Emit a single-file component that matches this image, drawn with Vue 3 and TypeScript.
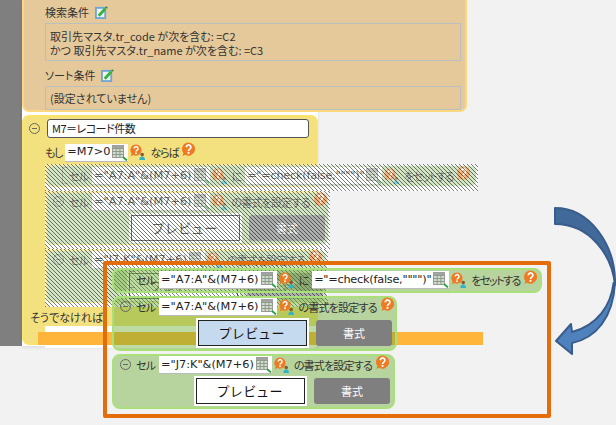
<script setup lang="ts">
interface FormatRow {
  id: string
  range: string
  wide: string
}

const formatRows: FormatRow[] = [
  { id: 'a', range: '="A7:A"&(M7+6)', wide: 'row-a' },
  { id: 'j', range: '="J7:K"&(M7+6)', wide: 'row-j' },
]
const setRange = '="A7:A"&(M7+6)'
const setValue = '="=check(false,"""")"'
</script>

<template>
  <div class="stage">
    <svg class="sprite" aria-hidden="true">
      <symbol id="i-grid" viewBox="0 0 17 17">
        <rect x="1.5" y="1.5" width="11" height="12" fill="#cfdccb" stroke="#9a9a9a" />
        <path d="M1.5 4.5h11M1.5 7.5h11M1.5 10.5h11M5.2 1.5v12M8.9 1.5v12" stroke="#8f9a8a" fill="none" />
        <rect x="1.5" y="1.5" width="11" height="2.6" fill="#a3a3a3" />
        <path d="M12 13l4 3.4" stroke="#23a23a" stroke-width="1.8" />
      </symbol>
      <symbol id="i-help" viewBox="0 0 16 16">
        <path d="M8 .5a7 7 0 1 1-3.6 13L1.6 15l1-3.2A7 7 0 0 1 8 .5z" fill="#ee7b23" />
        <path d="M5.7 5.6a2.4 2.4 0 1 1 3.7 2c-.9.6-1.4 1-1.4 2" fill="none" stroke="#fff" stroke-width="1.9" />
        <circle cx="8" cy="11.6" r="1.15" fill="#fff" />
      </symbol>
      <symbol id="i-ask" viewBox="0 0 16 16">
        <path d="M6 .5a5.6 5.6 0 1 1-3 10.4L.8 12.4l.8-2.8A5.6 5.6 0 0 1 6 .5z" fill="#ee7b23" />
        <path d="M4.2 4.5a1.9 1.9 0 1 1 2.9 1.6c-.7.4-1.1.8-1.1 1.5" fill="none" stroke="#fff" stroke-width="1.5" />
        <circle cx="6" cy="9.2" r=".95" fill="#fff" />
        <circle cx="12.2" cy="10.6" r="1.8" fill="#8a5a30" />
        <path d="M9.4 16c0-2.4 1.2-3.4 2.8-3.4s2.8 1 2.8 3.4z" fill="#35b2c6" />
      </symbol>
      <symbol id="i-edit" viewBox="0 0 14 14">
        <rect x="1" y="2" width="10" height="11" fill="#eef3f0" stroke="#6fa6d6" stroke-width="2" />
        <path d="M4 10.5L11 3" stroke="#36b23a" stroke-width="3" />
        <path d="M11.5 0.8l1.8 1.6" stroke="#2c7d2e" stroke-width="1.4" />
      </symbol>
    </svg>

    <div class="rail"></div>

    <div class="app">
      <section class="search">
        <div class="cond-title">検索条件<svg class="ic-edit"><use href="#i-edit" /></svg></div>
        <div class="cond-box cond-main">
          取引先マスタ.tr_code が次を含む: =C2<br />かつ 取引先マスタ.tr_name が次を含む: =C3
        </div>
        <div class="cond-title cond-sort">ソート条件<svg class="ic-edit"><use href="#i-edit" /></svg></div>
        <div class="cond-box cond-none">(設定されていません)</div>
      </section>

      <section class="block">
        <div class="block-head">
          <span class="toggle"></span>
          <div class="name-input">M7＝レコード件数</div>
        </div>
        <div class="cond-line">
          <span class="tight-if">もし</span>
          <span class="field"><span class="expr">=M7&gt;0</span><svg class="ic-grid"><use href="#i-grid" /></svg></span>
          <svg class="ic-ask"><use href="#i-ask" /></svg>
          <span class="after-ask tight-if">ならば</span>
          <svg class="ic-help"><use href="#i-help" /></svg>
        </div>

        <div class="group hatched">
          <div class="row row-set">
            <div class="line">
              <span class="ghost"></span>
              <span class="cell">セル</span>
              <span class="field"><span class="expr">{{ setRange }}</span><svg class="ic-grid"><use href="#i-grid" /></svg></span>
              <svg class="ic-ask"><use href="#i-ask" /></svg>
              <span class="after-ask">に</span>
              <span class="field field-value"><span class="expr">{{ setValue }}</span><svg class="ic-grid"><use href="#i-grid" /></svg></span>
              <svg class="ic-ask"><use href="#i-ask" /></svg>
              <span class="after-ask tight-set">をセットする</span>
              <svg class="ic-help"><use href="#i-help" /></svg>
            </div>
          </div>
          <div v-for="r in formatRows" :key="r.id" class="row row-format" :class="r.wide">
            <div class="line">
              <span class="toggle"></span>
              <span class="cell">セル</span>
              <span class="field"><span class="expr">{{ r.range }}</span><svg class="ic-grid"><use href="#i-grid" /></svg></span>
              <svg class="ic-ask"><use href="#i-ask" /></svg>
              <span class="after-ask tight">の書式を設定する</span>
              <svg class="ic-help"><use href="#i-help" /></svg>
            </div>
            <div class="actions">
              <div class="preview">プレビュー</div>
              <div class="format-btn">書式</div>
            </div>
          </div>
        </div>

        <div class="else-label">そうでなければ</div>
        <div class="else-body"></div>
      </section>
    </div>

    <div class="strip"></div>

    <div class="callout">
      <div class="group">
        <div class="row row-set">
          <div class="line">
            <span class="ghost"></span>
            <span class="cell">セル</span>
            <span class="field"><span class="expr">{{ setRange }}</span><svg class="ic-grid"><use href="#i-grid" /></svg></span>
            <svg class="ic-ask"><use href="#i-ask" /></svg>
            <span class="after-ask">に</span>
            <span class="field field-value"><span class="expr">{{ setValue }}</span><svg class="ic-grid"><use href="#i-grid" /></svg></span>
            <svg class="ic-ask"><use href="#i-ask" /></svg>
            <span class="after-ask tight-set">をセットする</span>
            <svg class="ic-help"><use href="#i-help" /></svg>
          </div>
        </div>
        <div
          v-for="(r, i) in formatRows"
          :key="r.id"
          class="row row-format"
          :class="[r.wide, { 'is-active': i === 0 }]"
        >
          <div class="line">
            <span class="toggle"></span>
            <span class="cell">セル</span>
            <span class="field"><span class="expr">{{ r.range }}</span><svg class="ic-grid"><use href="#i-grid" /></svg></span>
            <svg class="ic-ask"><use href="#i-ask" /></svg>
            <span class="after-ask tight">の書式を設定する</span>
            <svg class="ic-help"><use href="#i-help" /></svg>
          </div>
          <div class="actions">
            <div class="preview">プレビュー</div>
            <div class="format-btn">書式</div>
          </div>
        </div>
      </div>
    </div>

    <svg class="arrow" viewBox="0 0 616 425" aria-hidden="true">
      <path d="M613.5 283C611 305 598 325 572 332L571 324L556 341L572 354L572 343C596 338 613 318 615 283Z" fill="#4f81bd" stroke="#385d8a" stroke-width="2" stroke-linejoin="round" />
      <path d="M555 208C590 208 616 245 615 285C612 255 590 224 555 224Z" fill="#41699a" stroke="#385d8a" stroke-width="2" stroke-linejoin="round" />
    </svg>
  </div>
</template>

<style>
html,
body {
  margin: 0;
  background: #f2f2f2;
}
</style>

<style scoped>
.stage {
  position: relative;
  display: flex;
  align-items: flex-start;
  width: 616px;
  height: 425px;
  overflow: hidden;
  background: #f2f2f2;
  color: #333;
  font-family: "Noto Sans CJK JP", "DejaVu Sans", sans-serif;
  font-feature-settings: "palt";
  font-size: 11px;
  line-height: 14px;
}
.sprite {
  position: absolute;
  width: 0;
  height: 0;
}
.rail {
  flex: none;
  width: 22px;
  height: 346px;
  background: #7f7f7f;
}
.app {
  flex: none;
  display: flex;
  flex-direction: column;
  gap: 3px;
  width: 296px;
  height: 346px;
  background: #fff;
  box-shadow: 0 2px 3px rgba(0, 0, 0, 0.08);
}

/* search conditions */
.search {
  box-sizing: border-box;
  width: 445px;
  height: 112px;
  padding: 5px 4px 0 21px;
  background: #e6c99b;
  border: solid #fcd77e;
  border-width: 0 2px 2px;
  border-radius: 0 0 7px 7px;
}
.cond-title {
  display: flex;
  align-items: center;
  gap: 6px;
  height: 14px;
}
.cond-sort {
  margin-top: 7px;
}
.ic-edit {
  width: 13px;
  height: 13px;
}
.cond-box {
  box-sizing: border-box;
  margin-top: 4px;
  padding: 0 4px;
  border: 1px solid #b9c0bf;
}
.cond-main {
  height: 38px;
  padding-top: 5px;
}
.cond-none {
  height: 24px;
  padding-top: 4px;
}

/* main block */
.block {
  box-sizing: border-box;
  width: 296px;
  height: 230px;
  padding: 2px 0 0 21px;
  background: #f3e07f;
  border: 2px solid #fbe46c;
  border-radius: 7px;
}
.block-head {
  display: flex;
  align-items: center;
  height: 18px;
}
.block-head .toggle {
  margin-left: -16px;
  margin-right: 7px;
}
.name-input {
  box-sizing: border-box;
  flex: none;
  width: 262px;
  height: 19px;
  padding-left: 4px;
  background: #fff;
  border: 1px solid #555;
  border-radius: 3px;
  color: #222;
  font-size: 11px;
  letter-spacing: -0.5px;
  line-height: 17px;
  white-space: nowrap;
}
.cond-line {
  display: flex;
  align-items: center;
  height: 18px;
  margin-top: 6px;
}
.cond-line .field {
  margin-left: 3px;
}
.tight-if {
  letter-spacing: -1.2px;
}
.toggle {
  flex: none;
  position: relative;
  box-sizing: border-box;
  width: 11px;
  height: 11px;
  border: 1px solid #666;
  border-radius: 50%;
}
.toggle::after {
  content: "";
  position: absolute;
  left: 2px;
  right: 2px;
  top: 4px;
  height: 1px;
  background: #666;
}

/* fields */
.field {
  flex: none;
  display: inline-flex;
  align-items: center;
  height: 17px;
  padding: 0 0 0 2px;
  background: #fff;
  box-shadow: 0 1px 0 #bbb;
  color: #222;
}
.expr {
  font-family: "DejaVu Sans", sans-serif;
  font-feature-settings: normal;
  font-size: 11.3px;
  white-space: nowrap;
}
.field-value .expr {
  letter-spacing: -0.25px;
}
.ic-grid {
  flex: none;
  width: 17px;
  height: 17px;
  margin-left: 1px;
}
.ic-ask {
  flex: none;
  width: 16px;
  height: 16px;
  margin-left: 2px;
}
.ic-help {
  flex: none;
  width: 15px;
  height: 15px;
  margin: -5px 0 0 3px;
}
.after-ask {
  margin-left: 4px;
  white-space: nowrap;
}
.tight {
  letter-spacing: -0.8px;
}
.tight-set {
  letter-spacing: -1.5px;
}

/* rows */
.group {
  display: flex;
  flex-direction: column;
  align-items: flex-start;
  gap: 3px;
}
.row {
  position: relative;
  box-sizing: border-box;
  border: 2px solid #a9e07a;
  border-radius: 8px;
  background: rgba(107, 172, 47, 0.43);
}
.row-set {
  width: 430px;
  height: 25px;
}
.row-format {
  width: 285px;
  height: 55px;
}
.row-j {
  width: 283px;
}
.line {
  display: flex;
  align-items: center;
  height: 19px;
  padding-left: 6px;
}
.row-format .line {
  height: 17px;
}
.ghost {
  flex: none;
  width: 5px;
  height: 15px;
  margin-left: 9px;
  border: solid rgba(80, 80, 80, 0.45);
  border-width: 1px 0 1px 1px;
}
.cell {
  flex: none;
  width: 19px;
  margin: 0 4px 0 5px;
  letter-spacing: -0.8px;
  white-space: nowrap;
}
.ghost + .cell {
  margin-left: 1px;
}
.field-value {
  margin-left: 3px;
}
.actions {
  display: flex;
  align-items: center;
  gap: 7px;
  margin-top: 3px;
  padding-left: 82px;
}
.row-j .actions {
  padding-left: 80px;
}
.preview {
  box-sizing: border-box;
  width: 113px;
  height: 30px;
  background: #fff;
  border: 2px solid #fff;
  box-shadow: inset 0 0 0 1px #222;
  color: #111;
  font-size: 13px;
  letter-spacing: 1.5px;
  line-height: 26px;
  text-align: center;
}
.is-active .preview {
  background: #c5d9ef;
}
.format-btn {
  width: 76px;
  height: 26px;
  background: #7f7f7f;
  border-radius: 3px;
  color: #fff;
  line-height: 26px;
  text-align: center;
}

/* hatched (disabled) copy */
.hatched {
  width: 433px;
  margin: 3px 0 0 0;
  gap: 0;
}
.hatched .row {
  border-color: transparent;
  background: #bcd7a3 padding-box;
  margin-bottom: 3px;
  box-shadow: 0 3px 0 #fff;
}
.hatched .row-set {
  width: 433px;
  height: 24px;
}
.hatched .row::after {
  content: "";
  position: absolute;
  inset: -2px -2px -5px;
  background: repeating-linear-gradient(
    45deg,
    rgba(50, 60, 50, 0.65) 0 1px,
    rgba(255, 255, 255, 0.38) 1px 2.83px
  );
}

.else-label {
  margin: 3px 0 0 -15px;
  height: 15px;
}
.else-body {
  height: 22px;
  margin-top: 1px;
  background: #fff;
}

/* annotation overlays */
.strip {
  position: absolute;
  left: 38px;
  top: 332px;
  width: 445px;
  height: 13px;
  background: #ffb43a;
}
.callout {
  position: absolute;
  left: 103px;
  top: 261px;
  box-sizing: border-box;
  width: 448px;
  height: 157px;
  padding: 3px 5px;
  border: 4px solid #e46c0a;
  border-radius: 2px;
}
.arrow {
  position: absolute;
  inset: 0;
  width: 616px;
  height: 425px;
  pointer-events: none;
}
</style>
